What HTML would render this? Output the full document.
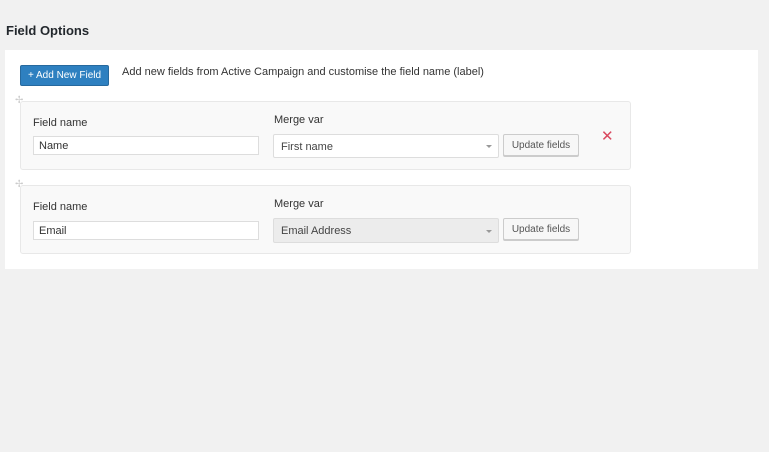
<!DOCTYPE html>
<html><head><style>
*{box-sizing:border-box;margin:0;padding:0}
body{width:769px;height:452px;background:#f1f1f1;font-family:"Liberation Sans","DejaVu Sans",sans-serif;font-size:11px;color:#333;position:relative;overflow:hidden}
.abs{position:absolute}
h2{position:absolute;left:6px;top:23px;font-size:13px;font-weight:bold;color:#23282d}
.panel{left:5px;top:50px;width:753px;height:219px;background:#fff}
.btn{left:20px;top:65px;width:89px;height:21px;background:#2e80c0;border:1px solid #26699e;border-radius:2px;color:#fff;font-size:10px;line-height:20px;text-align:center}
.card{left:20px;width:611px;height:69px;background:#f9f9f9;border:1px solid #e8e8e8;border-radius:3px}
.lbl{font-size:11px;color:#333}
.inp{background:#fff;border:1px solid #ddd;font-size:11px;padding-left:5px;color:#333}
.sel{border:1px solid #ddd;border-radius:2px;font-size:11px;padding-left:7px;color:#444}
.ub{background:#f7f7f7;border:1px solid #ccc;border-radius:2px;font-size:10px;color:#555;text-align:center;box-shadow:0 1px 0 #ccc}
.arr{position:absolute;right:6px;top:10px;width:0;height:0;border-left:3px solid transparent;border-right:3px solid transparent;border-top:3px solid #999}
.drag{color:#ccc;font-size:10px}
</style></head><body>
<h2>Field Options</h2>
<div class="abs panel"></div>
<div class="abs btn">+ Add New Field</div>
<div class="abs" style="left:122px;top:66px;font-size:11px;color:#333">Add new fields from Active Campaign and customise the field name (label)</div>

<div class="abs drag" style="left:15px;top:95px">✢</div>
<div class="abs card" style="top:101px"></div>
<div class="abs lbl" style="left:33px;top:117px">Field name</div>
<div class="abs inp" style="left:33px;top:136px;width:226px;height:19px;line-height:18px">Name</div>
<div class="abs lbl" style="left:274px;top:114px">Merge var</div>
<div class="abs sel" style="left:273px;top:134px;width:226px;height:24px;line-height:24px;background:#fff">First name<span class="arr"></span></div>
<div class="abs ub" style="left:503px;top:134px;width:76px;height:22px;line-height:21px">Update fields</div>
<div class="abs" style="left:601px;top:127px;color:#d9495f;font-size:15px;font-weight:bold">✕</div>

<div class="abs drag" style="left:15px;top:179px">✢</div>
<div class="abs card" style="top:185px"></div>
<div class="abs lbl" style="left:33px;top:201px">Field name</div>
<div class="abs inp" style="left:33px;top:221px;width:226px;height:19px;line-height:18px">Email</div>
<div class="abs lbl" style="left:274px;top:198px">Merge var</div>
<div class="abs sel" style="left:273px;top:218px;width:226px;height:25px;line-height:25px;background:#ececec">Email Address<span class="arr" style="top:11px"></span></div>
<div class="abs ub" style="left:503px;top:218px;width:76px;height:22px;line-height:21px">Update fields</div>
</body></html>
